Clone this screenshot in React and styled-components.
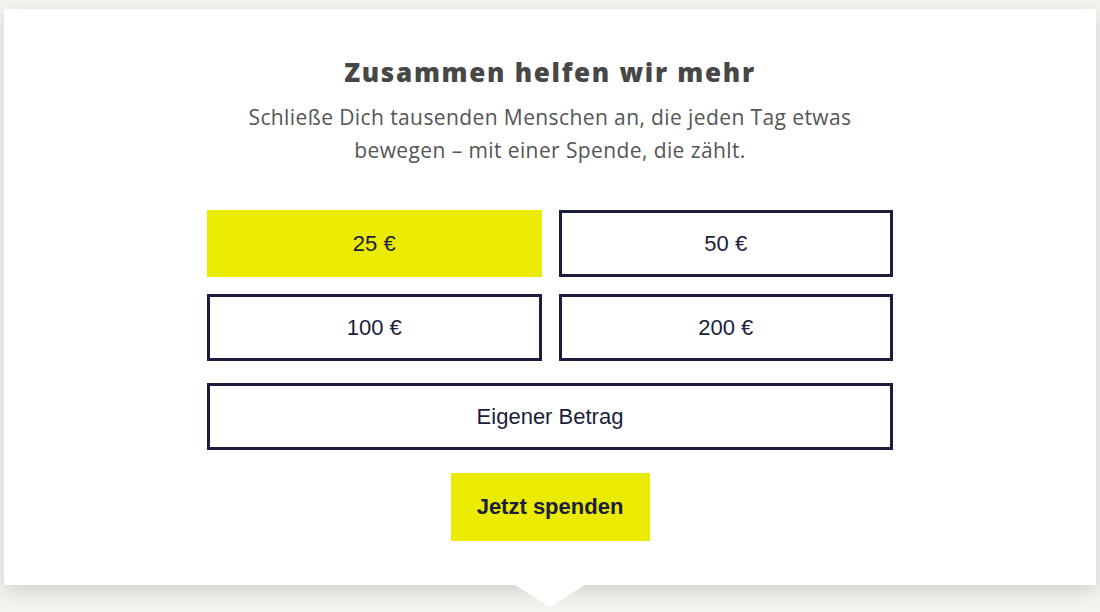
import React, { useState } from "react";
import styled, { createGlobalStyle } from "styled-components";

const GlobalStyle = createGlobalStyle`
  html, body {
    margin: 0;
    padding: 0;
    background: #f4f3ee;
  }
  * {
    box-sizing: border-box;
  }
`;

const NAVY = "#1b1d3d";
const YELLOW = "#ebeb00";

const Page = styled.div`
  width: 1100px;
  height: 612px;
  padding: 9px 4px 0;
  overflow: hidden;
`;

// Spenden-Box mit Pfeil nach unten
const Card = styled.section`
  position: relative;
  height: 576px;
  background: #fff;
  box-shadow: 0 6px 18px rgba(0, 0, 0, 0.14);
  padding-top: 47px;
  display: flex;
  flex-direction: column;
  align-items: center;

  &::after {
    content: "";
    position: absolute;
    left: 50%;
    bottom: -22px;
    margin-left: -35px;
    border-left: 35px solid transparent;
    border-right: 35px solid transparent;
    border-top: 22px solid #fff;
  }
`;

const Title = styled.h2`
  margin: 0;
  font-family: "Open Sans", "Noto Sans", sans-serif;
  font-weight: 800;
  font-size: 26px;
  line-height: 32px;
  letter-spacing: 1.7px;
  color: #474747;
`;

const Lead = styled.p`
  margin: 13px 0 0;
  width: 660px;
  font-family: "Open Sans", "Noto Sans", sans-serif;
  font-size: 21px;
  line-height: 33px;
  letter-spacing: 0.4px;
  text-align: center;
  color: #555;
`;

const AmountGrid = styled.div`
  margin-top: 43px;
  width: 686px;
  display: grid;
  grid-template-columns: 1fr 1fr;
  gap: 17px;
`;

const AmountButton = styled.button`
  height: 67px;
  border: 3px solid ${(p) => (p.$active ? YELLOW : NAVY)};
  background: ${(p) => (p.$active ? YELLOW : "#fff")};
  color: ${NAVY};
  font-family: "Liberation Sans", Arial, sans-serif;
  font-size: 22px;
  cursor: pointer;
  padding: 0;
`;

const CustomAmount = styled(AmountButton)`
  margin-top: 22px;
  width: 686px;
`;

const DonateButton = styled.button`
  margin-top: 23px;
  width: 199px;
  height: 68px;
  border: none;
  background: ${YELLOW};
  color: ${NAVY};
  font-family: "Liberation Sans", Arial, sans-serif;
  font-weight: 700;
  font-size: 22px;
  cursor: pointer;
`;

const amounts = [25, 50, 100, 200];

export default function App() {
  const [selected, setSelected] = useState(25);

  return (
    <>
      <GlobalStyle />
      <Page>
        <Card>
          <Title>Zusammen helfen wir mehr</Title>
          <Lead>
            Schließe Dich tausenden Menschen an, die jeden Tag etwas bewegen –
            mit einer Spende, die zählt.
          </Lead>
          <AmountGrid>
            {amounts.map((a) => (
              <AmountButton
                key={a}
                $active={selected === a}
                onClick={() => setSelected(a)}
              >
                {a} €
              </AmountButton>
            ))}
          </AmountGrid>
          <CustomAmount
            $active={selected === "custom"}
            onClick={() => setSelected("custom")}
          >
            Eigener Betrag
          </CustomAmount>
          <DonateButton>Jetzt spenden</DonateButton>
        </Card>
      </Page>
    </>
  );
}
